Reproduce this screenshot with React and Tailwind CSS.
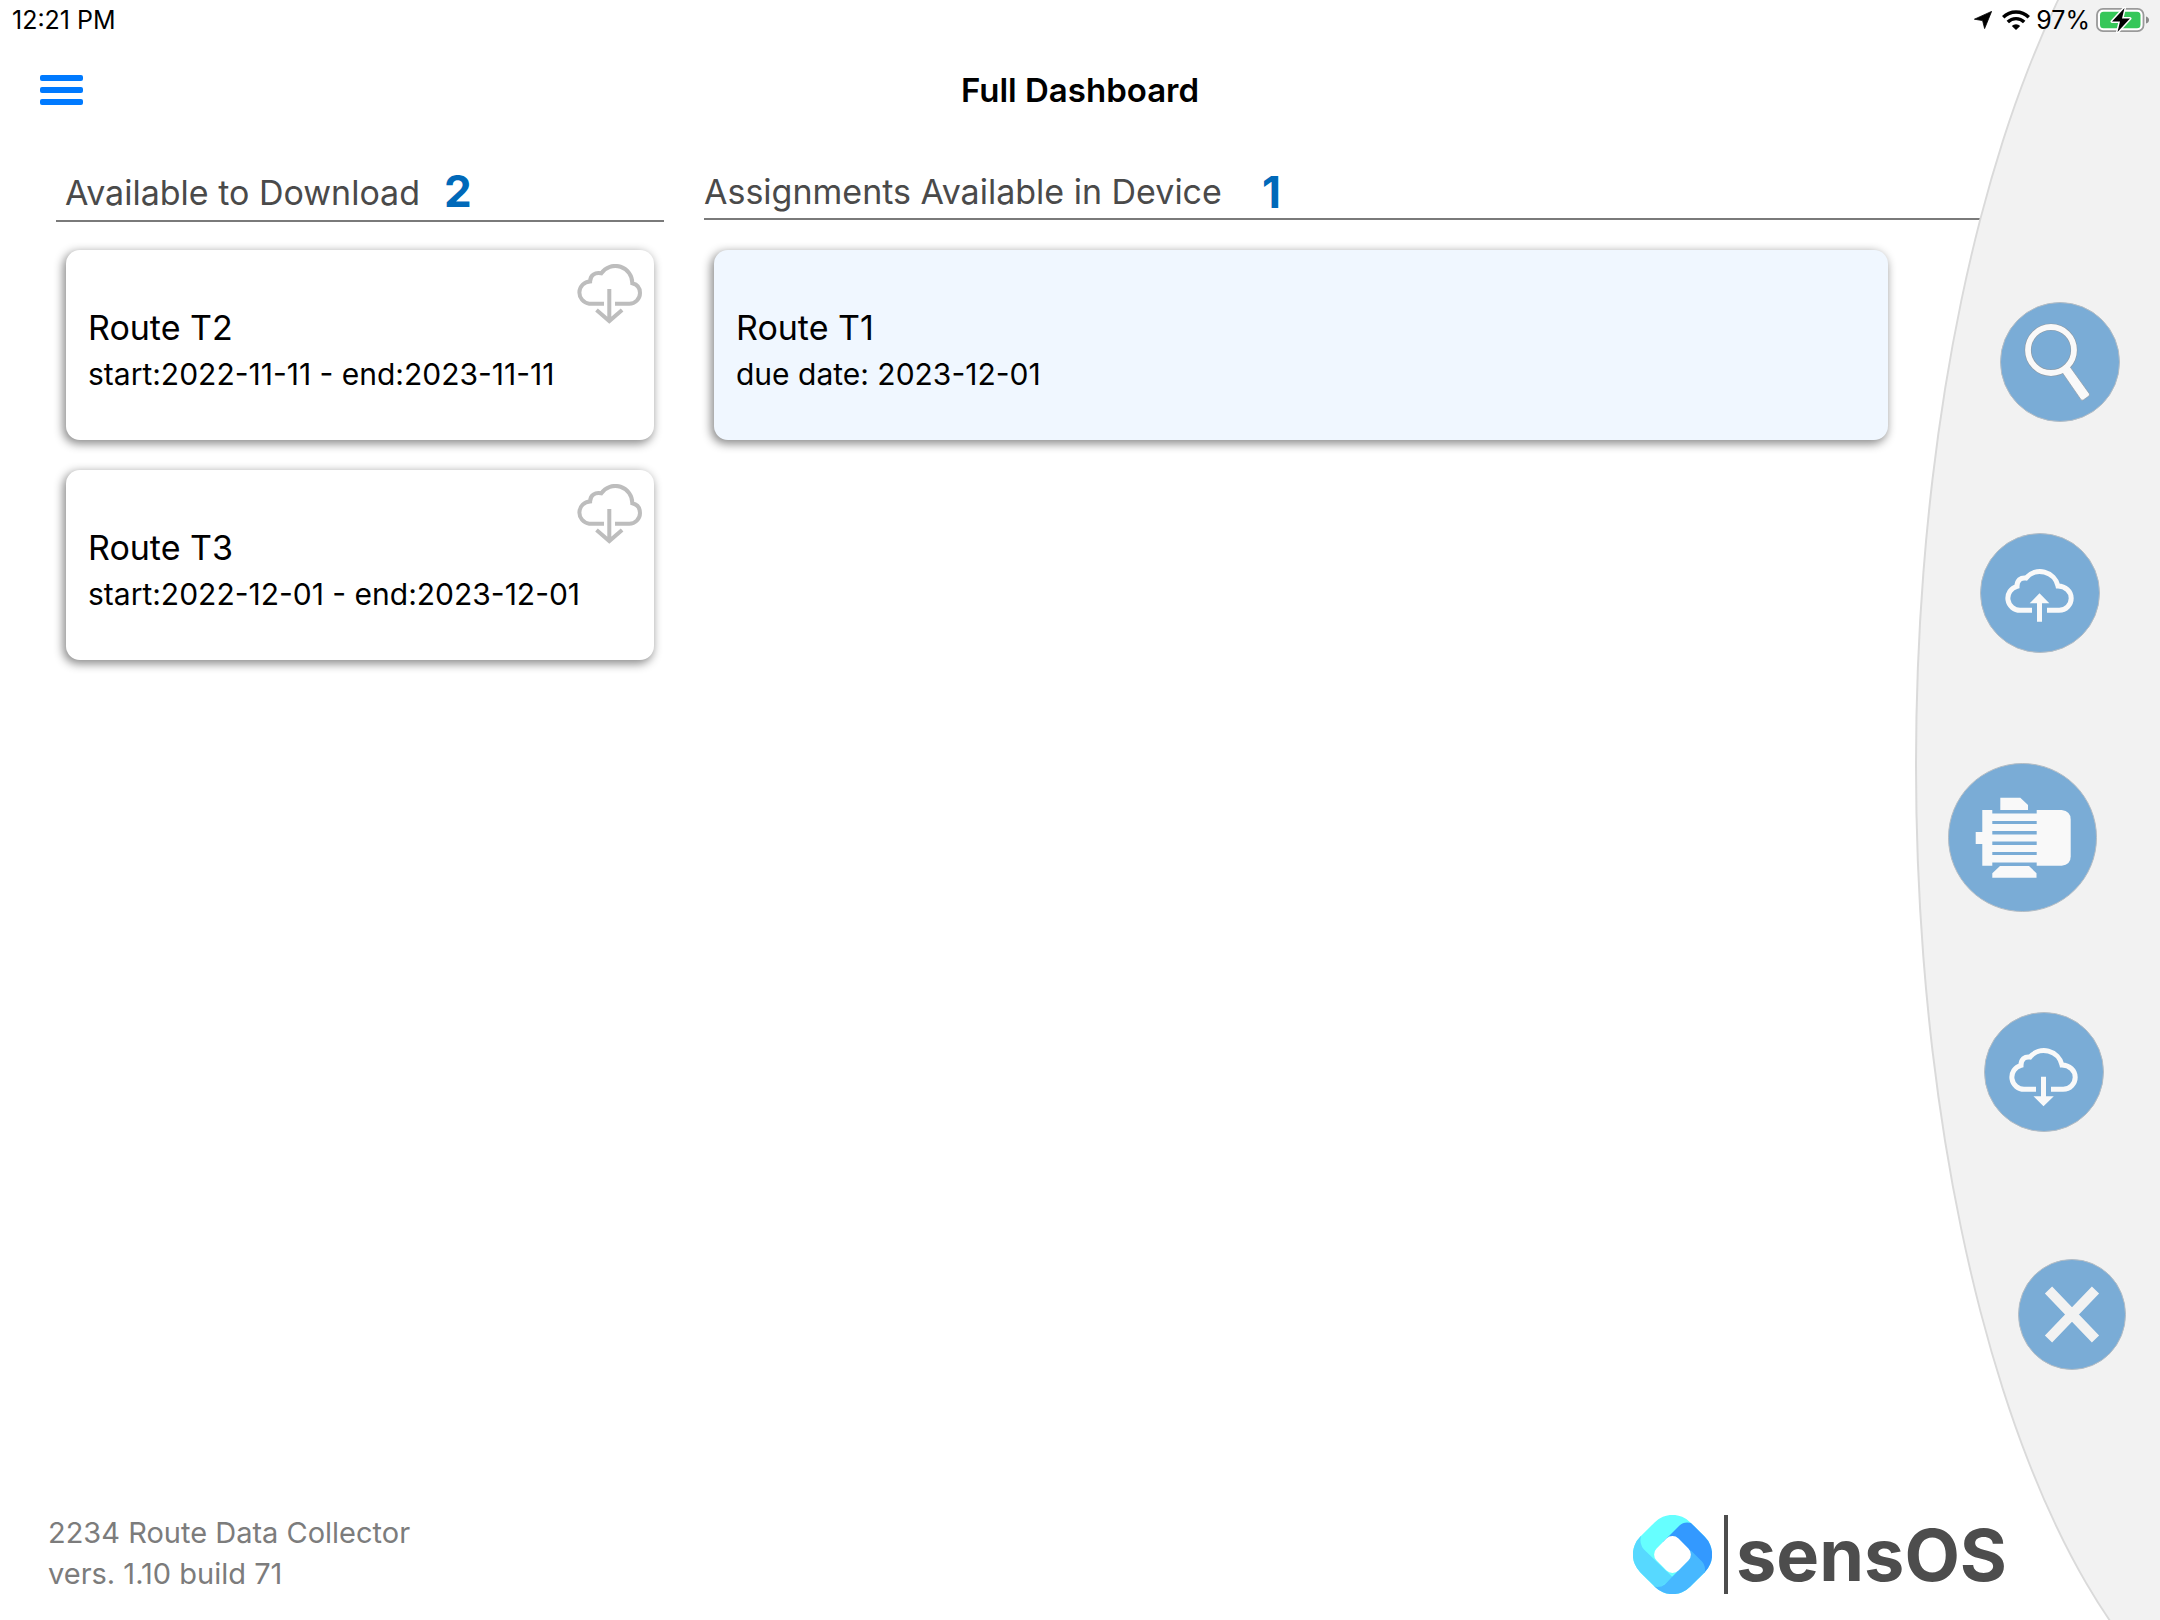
function StatusBar() {
  return (
    <div className="relative z-20 flex h-10 items-center justify-between pl-3 pr-[10px] text-[25px] leading-10 text-black">
      <span>12:21 PM</span>
      <div className="flex items-center gap-[10px]">
        <svg viewBox="0 0 18 18" className="h-[18px] w-[18px]" aria-hidden="true">
          <path d="M17.6.4 10.6 17.6 8.6 9.6.4 8.2Z" fill="#000" stroke="#000" strokeWidth=".8" strokeLinejoin="round" />
        </svg>
        <svg viewBox="0 0 28 20" className="h-5 w-7" aria-hidden="true">
          <g fill="none" stroke="#000" strokeWidth="3.4">
            <path d="M1.2 7.2a18.2 18.2 0 0 1 25.6 0" />
            <path d="M5.8 12a11.6 11.6 0 0 1 16.4 0" />
          </g>
          <path d="M9.8 16a6 6 0 0 1 8.4 0L14 20Z" fill="#000" />
        </svg>
        <span className="-ml-1">97%</span>
        <svg viewBox="0 0 54 26" className="-ml-1 h-[26px] w-[54px]" aria-hidden="true">
          <rect x="1" y="1.800" width="46.500" height="22.400" rx="6" fill="#fff" stroke="#9a9a9a" strokeWidth="1.800" />
          <rect x="4" y="4.800" width="40.500" height="16.400" rx="3.500" fill="#35c759" />
          <path d="M50 9.500v7q3-1 3-3.500t-3-3.500Z" fill="#8a8a8a" />
          <path d="M28.500 1 16 14.500h8L21.500 25 34 11.500h-8Z" fill="#000" stroke="#fff" strokeWidth="3" strokeLinejoin="round" paintOrder="stroke" />
        </svg>
      </div>
    </div>
  );
}

function CardCloud() {
  return (
    <svg viewBox="0 0 66 60" className="h-[60px] w-[66px]" fill="none" stroke="#bdbdbd" strokeWidth="4" aria-hidden="true">
      <path d="M28 39.700H13.200a11.200 11.200 0 0 1 .9-22.300c0-6 4.800-9.500 11.200-8.100a17 17 0 0 1 31 10c4.800 1.200 7.700 5 7.700 9.700a10.700 10.700 0 0 1-10.800 10.700H39" />
      <path d="M33.300 25v32M20.500 46l12.800 11 12.800-11" />
    </svg>
  );
}

function RouteCard({ title, detail, download, tinted }) {
  return (
    <article
      className={
        "relative flex h-[190px] flex-col justify-center rounded-[14px] pl-[22px] pt-3 text-black shadow-[-2px_3px_10px_1px_rgba(0,0,0,0.45)] " +
        (tinted ? "bg-[#f0f7ff]" : "bg-white")
      }
    >
      <h3 className="text-[34px] leading-[46px]">{title}</h3>
      <p className="text-[30px] leading-[46px]">{detail}</p>
      {download && (
        <button type="button" aria-label={"Download " + title} className="absolute right-3 top-[14px]">
          <CardCloud />
        </button>
      )}
    </article>
  );
}

function CloudOutline() {
  return (
    <path
      d="M52 77.300H40.500a12.200 12.200 0 0 1-3.500-24c0-5.800 3.600-9 9-8.300a18.500 18.500 0 0 1 32 8c7.500.2 13.200 5.300 13.200 12.200a12 12 0 0 1-12 12.100H67"
      fill="none"
      stroke="#f9f9f9"
      strokeWidth="5"
    />
  );
}

function SideButton({ label, className, size, children }) {
  return (
    <button type="button" aria-label={label} className={className}>
      <svg viewBox={"0 0 " + size[0] + " " + size[1]} className="h-full w-full" aria-hidden="true">
        <ellipse
          cx={size[0] / 2}
          cy={size[1] / 2}
          rx={size[0] / 2 - 0.5}
          ry={size[1] / 2 - 0.5}
          fill="#7aacd6"
          stroke="#b3bcc4"
          strokeWidth="1"
        />
        {children}
      </svg>
    </button>
  );
}

function SidePanel() {
  return (
    <aside className="absolute inset-y-0 right-0 z-10 w-[245px] overflow-hidden">
      <div className="absolute left-0 top-[-220px] h-[1970px] w-[768px] rounded-[50%] border-2 border-[#dadada] bg-[#f2f2f2]" />
      <nav className="relative flex flex-col items-start pt-[302px]">
        <SideButton label="Search" size={[120, 120]} className="ml-[85px] h-[120px] w-[120px]">
          <circle cx="51" cy="48" r="23" fill="none" stroke="#8d9aa5" strokeWidth="7" />
          <path d="M61.500 69.500 69.500 64l19.700 27.500q1 1.500-.4 2.600l-5.400 3.800q-1.500.9-2.600-.5Z" fill="#f9f9f9" stroke="#8d9aa5" strokeWidth=".7" />
          <circle cx="51" cy="48" r="23" fill="none" stroke="#f9f9f9" strokeWidth="5.800" />
        </SideButton>
        <SideButton label="Upload" size={[120, 120]} className="ml-[65px] mt-[111px] h-[120px] w-[120px]">
          <CloudOutline />
          <path d="M59.500 60.300 69.300 70.300H62v18.400h-5V70.300h-7.300Z" fill="#f9f9f9" />
        </SideButton>
        <SideButton label="Machines" size={[149, 149]} className="ml-[33px] mt-[110px] h-[149px] w-[149px]">
          <g fill="#f9f9f9">
            <path d="M52.300 34.700h20L80 42v5H52.300Z" />
            <path d="M34.300 47h10v55.700h-10V81h-6.600V69h6.600Z" />
            <path d="M44 50.500h45V58H44ZM44 61h45v7H44ZM44 71.500h45v7H44ZM44 82h45v7H44ZM44 92h45v7.500H44Z" />
            <path d="M88.700 47h25q9 1 9 9.500v37q0 8.200-9 9.200h-25Z" />
            <path d="M52 103h29l7.500 7.300v4.500h-44.200v-4.500Z" />
          </g>
        </SideButton>
        <SideButton label="Download" size={[120, 120]} className="ml-[69px] mt-[100px] h-[120px] w-[120px]">
          <CloudOutline />
          <path d="M57 64.700h5v19.600h7.800L59.500 94.300 49.500 84.300H57Z" fill="#f9f9f9" />
        </SideButton>
        <SideButton label="Close" size={[108, 111]} className="ml-[103px] mt-[127px] h-[111px] w-[108px]">
          <path d="M30.500 31 77.500 80M77.500 31 30.500 80" stroke="#f2f2f2" strokeWidth="10" />
        </SideButton>
      </nav>
    </aside>
  );
}

function Logo() {
  return (
    <div className="flex items-center">
      <svg viewBox="0 0 79 79" className="h-[79px] w-[79px]" aria-hidden="true">
        <clipPath id="mark">
          <rect x="4.150" y="4.150" width="70.700" height="70.700" rx="25" transform="rotate(45 39.500 39.500)" />
        </clipPath>
        <g clipPath="url(#mark)">
          <rect width="79" height="79" fill="#66ffff" />
          <path d="M0 14 8 21Q6 29 11 34.500L39.500 62 20 79H0Z" fill="#57d9ff" />
          <path d="M79 0H66L58.500 8Q51 6 46.500 10.500L30 27 57 50 71.700 58 79 60Z" fill="#3399ff" />
          <path d="M19.500 71.300Q27 73.500 31.500 69.500L43.700 57.300 57.700 35.300 69 46.500Q73 51 71.700 58L79 66V79H14Z" fill="#47b8ff" />
        </g>
        <rect x="24" y="24" width="31" height="31" rx="8.500" transform="rotate(45 39.500 39.500)" fill="#fff" />
      </svg>
      <div className="ml-3 h-[79px] w-1 bg-[#4d4d4d]" />
      <span className="ml-2 text-[72px] font-bold leading-[79px] text-[#4d4d4d]">sensOS</span>
    </div>
  );
}

export default function App() {
  return (
    <div className="relative flex min-h-screen flex-col overflow-hidden bg-white font-[Inter,sans-serif]">
      <StatusBar />
      <header className="grid h-[100px] grid-cols-[1fr_auto_1fr] items-center px-10">
        <button type="button" aria-label="Menu" className="flex w-[43px] flex-col gap-[6px]">
          <span className="h-[6px] rounded-[2px] bg-[#007aff]" />
          <span className="h-[6px] rounded-[2px] bg-[#007aff]" />
          <span className="h-[6px] rounded-[2px] bg-[#007aff]" />
        </button>
        <h1 className="text-[33px] font-semibold leading-10 text-black">Full Dashboard</h1>
      </header>
      <main className="grid flex-1 grid-cols-[608px_1fr] content-start gap-x-10 pl-14 pt-[22px]">
        <section>
          <div className="flex h-[60px] items-center gap-6 border-b-2 border-[#7a7a7a] pl-[9px]">
            <h2 className="pt-1 text-[34px] leading-10 text-[#4a4a4a]">Available to Download</h2>
            <span className="text-[44px] font-bold leading-10 text-[#0069b9]">2</span>
          </div>
          <div className="flex flex-col gap-[30px] px-[10px] pt-7">
            <RouteCard title="Route T2" detail="start:2022-11-11 - end:2023-11-11" download />
            <RouteCard title="Route T3" detail="start:2022-12-01 - end:2023-12-01" download />
          </div>
        </section>
        <section>
          <div className="flex h-[58px] items-center gap-10 border-b-2 border-[#7a7a7a] pt-1">
            <h2 className="text-[34px] leading-10 text-[#4a4a4a]">Assignments Available in Device</h2>
            <span className="text-[44px] font-bold leading-10 text-[#0069b9]">1</span>
          </div>
          <div className="pl-[10px] pr-[272px] pt-[30px]">
            <RouteCard title="Route T1" detail="due date: 2023-12-01" tinted />
          </div>
        </section>
      </main>
      <footer className="flex items-end justify-between pb-[26px] pl-12 pr-[153px]">
        <p className="text-[29px] leading-[41px] text-[#7c7c7c]">
          2234 Route Data Collector
          <br />
          vers. 1.10 build 71
        </p>
        <Logo />
      </footer>
      <SidePanel />
    </div>
  );
}
